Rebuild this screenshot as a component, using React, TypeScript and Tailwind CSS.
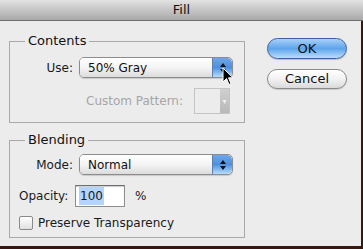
import React from "react";

function Stepper({ disabled }: { disabled?: boolean }) {
  return (
    <div
      className={
        disabled
          ? "flex w-[9px] flex-col items-center justify-center bg-gradient-to-b from-[#d0d0d0] to-[#b8b8b8]"
          : "flex w-[20px] flex-col items-center justify-center gap-[2px] rounded-r-[5px] border-l border-[#5a7fb0] bg-gradient-to-b from-[#6fa6e8] via-[#4d90e0] to-[#b8dcfb]"
      }
    >
      {disabled ? (
        <svg width="5" height="9" viewBox="0 0 5 9">
          <path d="M0.5 3 L4.5 3 L2.5 7 Z" fill="#f2f2f2" />
        </svg>
      ) : (
        <>
          <svg width="6" height="4" viewBox="0 0 6 4">
            <path d="M3 0 L6 4 L0 4 Z" fill="#111" />
          </svg>
          <svg width="6" height="4" viewBox="0 0 6 4">
            <path d="M0 0 L6 0 L3 4 Z" fill="#111" />
          </svg>
        </>
      )}
    </div>
  );
}

function Select({ value }: { value: string }) {
  return (
    <div className="flex h-[21px] w-[154px] overflow-hidden rounded-[5px] border border-[#8c8c8c] shadow-[0_1px_1px_rgba(0,0,0,0.15)]">
      <div className="flex flex-1 items-center bg-gradient-to-b from-white via-[#f4f4f4] to-[#dcdcdc] pl-[8px] text-[#111]">
        {value}
      </div>
      <Stepper />
    </div>
  );
}

export default function App() {
  return (
    <div
      className="relative flex h-[249px] w-[363px] flex-col overflow-hidden bg-[#3a1812] text-[12px] text-[#1a1a1a]"
      style={{ fontFamily: '"DejaVu Sans", "Liberation Sans", sans-serif' }}
    >
      {/* Title bar */}
      <div className="flex h-[21px] shrink-0 items-center justify-center border-b border-[#6e6e6e] bg-gradient-to-b from-[#e2e2e2] to-[#a9a9a9] text-[13px] text-[#111]">
        Fill
      </div>

      {/* Body */}
      <div className="mr-[2px] flex h-[225px] shrink-0 gap-[22px] bg-[#ececec] pl-[9px] pt-[12px]">
        <div className="flex w-[236px] flex-col gap-[9px]">
          <fieldset className="m-0 h-[90px] min-w-0 border border-[#a9a9a9] px-0 pb-0 pt-[8px]">
            <legend className="ml-[15px] px-[3px] text-[13px] leading-[16px] text-[#111]">
              Contents
            </legend>
            <div className="flex items-center gap-[6px] pl-[32px]">
              <span className="w-[31px] text-right">Use:</span>
              <Select value="50% Gray" />
            </div>
            <div className="mt-[10px] flex items-center gap-[11px] pl-[76px]">
              <span className="text-[#a6a6a6]">Custom Pattern:</span>
              <div className="flex h-[26px] w-[36px] border border-[#c4c4c4] bg-[#ececec]">
                <div className="flex-1" />
                <Stepper disabled />
              </div>
            </div>
          </fieldset>

          <fieldset className="m-0 h-[106px] min-w-0 border border-[#a9a9a9] px-0 pb-0 pt-[6px]">
            <legend className="ml-[15px] px-[3px] text-[13px] leading-[16px] text-[#111]">
              Blending
            </legend>
            <div className="flex items-center gap-[6px] pl-[23px]">
              <span className="w-[40px] text-right">Mode:</span>
              <Select value="Normal" />
            </div>
            <div className="mt-[10px] flex items-center pl-[9px]">
              <span className="w-[56px]">Opacity:</span>
              <div className="flex h-[22px] w-[50px] items-center border border-[#8e8e8e] border-t-[#6e6e6e] bg-white pl-[3px] shadow-[inset_0_1px_1px_rgba(0,0,0,0.2)]">
                <span className="bg-[#b3d4fc] px-[1px]">100</span>
              </div>
              <span className="ml-[10px]">%</span>
            </div>
            <label className="mt-[7px] flex items-center gap-[5px] pl-[9px]">
              <span className="h-[14px] w-[14px] rounded-[2px] border border-[#8a8a8a] bg-gradient-to-b from-white to-[#e0e0e0]" />
              Preserve Transparency
            </label>
          </fieldset>
        </div>

        <div className="flex flex-col gap-[10px] pt-[5px]">
          <button className="flex h-[21px] w-[80px] items-center justify-center rounded-full border border-[#3e64a0] bg-gradient-to-b from-[#a9d0f7] via-[#5ea4ec] to-[#b9defc] text-[13px] text-[#111] shadow-[0_1px_1px_rgba(0,0,0,0.2)]">
            OK
          </button>
          <button className="flex h-[20px] w-[80px] items-center justify-center rounded-full border border-[#8a8a8a] bg-gradient-to-b from-white via-[#f2f2f2] to-[#dadada] text-[13px] text-[#111] shadow-[0_1px_1px_rgba(0,0,0,0.15)]">
            Cancel
          </button>
        </div>
      </div>

      {/* Mouse pointer */}
      <svg
        className="absolute left-[222px] top-[67px]"
        width="12"
        height="19"
        viewBox="0 0 12 19"
      >
        <path
          d="M1 1 L1 15 L4.5 11.5 L7 17.5 L9 16.6 L6.5 10.8 L11 10.8 Z"
          fill="#000"
          stroke="#fff"
          strokeWidth="1"
        />
      </svg>
    </div>
  );
}
